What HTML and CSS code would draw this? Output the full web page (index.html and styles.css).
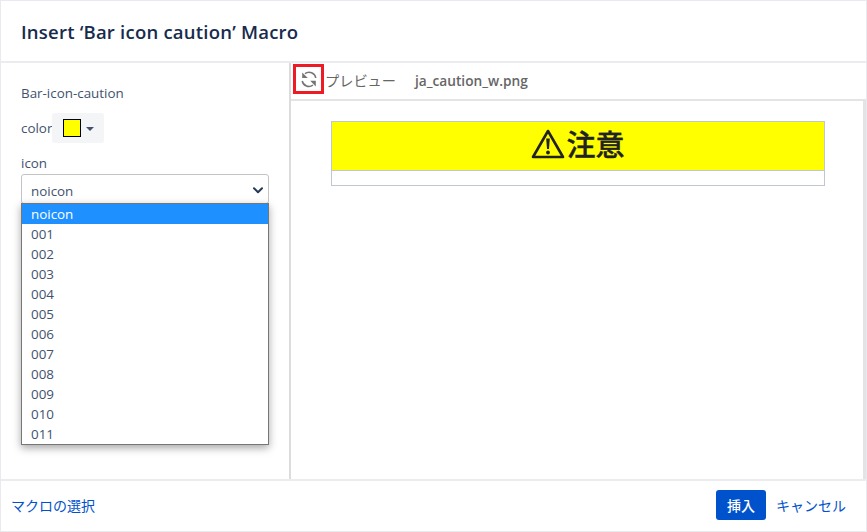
FILE: index.html
```html
<!DOCTYPE html>
<html lang="ja">
<head>
    <meta charset="UTF-8">
    <title>Insert Macro</title>
    <link rel="stylesheet" href="styles.css">
</head>
<body>
    <div class="dialog">
        <div class="dialog-header">
            <h1>Insert ‘Bar icon caution’ Macro</h1>
        </div>

        <div class="dialog-body">
            <div class="params">
                <div class="param-title">Bar-icon-caution</div>

                <div class="color-row">
                    <span>color</span>
                    <div class="color-btn">
                        <span class="swatch"></span>
                        <span class="caret"></span>
                    </div>
                </div>

                <div class="icon-label">icon</div>
                <div class="select-wrap">
                    <div class="select-box">
                        <span>noicon</span>
                        <svg class="chevron" width="10" height="7" viewBox="0 0 10 7">
                            <path d="M1 1.2 L5 5.2 L9 1.2" fill="none" stroke="#253858" stroke-width="2" stroke-linecap="round" stroke-linejoin="round"/>
                        </svg>
                    </div>
                    <ul class="select-list">
                        <li class="selected">noicon</li>
                        <li>001</li>
                        <li>002</li>
                        <li>003</li>
                        <li>004</li>
                        <li>005</li>
                        <li>006</li>
                        <li>007</li>
                        <li>008</li>
                        <li>009</li>
                        <li>010</li>
                        <li>011</li>
                    </ul>
                </div>
            </div>

            <div class="preview">
                <div class="preview-bar">
                    <div class="refresh-btn">
                        <svg width="18" height="18" viewBox="0 0 18 18">
                            <path d="M15.8 8 A6.8 6.8 0 0 0 5 3.6" fill="none" stroke="#757575" stroke-width="1.5"/>
                            <path d="M2.2 2.4 L2.2 8 L7.8 8 Z" fill="#757575"/>
                            <path d="M2.2 11 A6.8 6.8 0 0 0 13 15" fill="none" stroke="#757575" stroke-width="1.5"/>
                            <path d="M15.8 16.4 L15.8 10.8 L10.2 10.8 Z" fill="#757575"/>
                        </svg>
                    </div>
                    <span class="preview-label">プレビュー</span>
                    <span class="file-name">ja_caution_w.png</span>
                </div>

                <div class="preview-area">
                    <div class="bar-table">
                        <div class="bar-yellow">
                            <svg class="warn-icon" width="34" height="30" viewBox="0 0 34 30">
                                <path d="M17 2 L32 28 L2 28 Z" fill="none" stroke="#222" stroke-width="2.6" stroke-linejoin="round"/>
                                <path d="M15.2 9.5 L18.8 9.5 L18 20 L16 20 Z" fill="#222"/>
                                <circle cx="17" cy="23.5" r="1.9" fill="#222"/>
                            </svg>
                            <span class="bar-text">注意</span>
                        </div>
                        <div class="bar-empty"></div>
                    </div>
                </div>
            </div>
        </div>

        <div class="dialog-footer">
            <a href="#" class="link">マクロの選択</a>
            <div class="footer-actions">
                <button class="insert-btn">挿入</button>
                <a href="#" class="link">キャンセル</a>
            </div>
        </div>
    </div>
</body>
</html>
```

FILE: styles.css
```css
* {
    margin: 0;
    padding: 0;
    box-sizing: border-box;
}

body {
    font-family: 'Open Sans', 'Noto Sans CJK JP', sans-serif;
    font-size: 13.4px;
    color: #42526e;
    background: white;
    width: 867px;
    height: 532px;
    overflow: hidden;
}

.dialog {
    width: 867px;
    height: 532px;
    display: flex;
    flex-direction: column;
    border: 1px solid #e9e9ef;
}

.dialog-header {
    height: 62px;
    padding: 0 20px 0;
    display: flex;
    align-items: center;
    border-bottom: 2px solid #ebecf0;
    flex-shrink: 0;
}

.dialog-header h1 {
    font-size: 18.5px;
    font-weight: 600;
    letter-spacing: 0.22px;
    color: #172b4d;
}

.dialog-body {
    flex: 1;
    display: flex;
    min-height: 0;
}

.params {
    width: 288px;
    padding: 21px 20px 0;
    flex-shrink: 0;
    color: #42526e;
}

.param-title {
    line-height: 18px;
}

.color-row {
    display: flex;
    align-items: center;
    margin-top: 11px;
    height: 30px;
}

.color-row > span {
    margin-top: -1px;
}

.color-btn {
    width: 52px;
    height: 30px;
    background: #f4f5f7;
    border-radius: 3px;
    display: flex;
    align-items: center;
    padding-left: 11px;
}

.swatch {
    width: 18px;
    height: 18px;
    background: #ffff00;
    border: 1px solid black;
}

.caret {
    width: 0;
    height: 0;
    margin-left: 5px;
    margin-top: 2px;
    border-left: 4px solid transparent;
    border-right: 4px solid transparent;
    border-top: 4px solid #42526e;
}

.icon-label {
    margin-top: 11px;
    line-height: 18px;
}

.select-wrap {
    position: relative;
    margin-top: 2px;
}

.select-box {
    width: 248px;
    height: 30px;
    border: 1px solid #c4c4c4;
    border-radius: 3px;
    display: flex;
    align-items: center;
    justify-content: space-between;
    padding: 3px 5px 0 9px;
    color: #42526e;
}

.select-list {
    position: absolute;
    top: 29px;
    left: 0;
    width: 248px;
    list-style: none;
    background: white;
    border: 1px solid #767676;
    box-shadow: 0 3px 8px rgba(0, 0, 0, 0.35);
}

.select-list li {
    height: 20px;
    line-height: 20px;
    padding-left: 9px;
}

.select-list li.selected {
    background: #1e90ff;
    color: white;
}

.preview {
    flex: 1;
    display: flex;
    flex-direction: column;
    border-left: 2px solid #dcdcdc;
    min-width: 0;
}

.preview-bar {
    height: 38px;
    display: flex;
    align-items: center;
    padding: 0 0 2px 2px;
    border-bottom: 2px solid #e4e4e4;
    flex-shrink: 0;
    color: #666;
}

.refresh-btn {
    width: 31px;
    height: 30px;
    margin-bottom: 2px;
    border: 3px solid #ed1c24;
    display: flex;
    align-items: center;
    justify-content: center;
}

.preview-label {
    font-size: 14.2px;
    margin-left: 1px;
}

.file-name {
    font-size: 13.7px;
    font-weight: 600;
    margin-left: 19px;
}

.preview-area {
    flex: 1;
    padding: 20px 40px 0;
    border-right: 3px solid #e4e4e4;
}

.bar-table {
    width: 494px;
    border: 1px solid #c1c7d0;
}

.bar-yellow {
    height: 49px;
    background: #ffff00;
    border-bottom: 1px solid #c1c7d0;
    display: flex;
    align-items: center;
    justify-content: center;
    gap: 1px;
    padding-bottom: 4px;
}

.bar-text {
    font-size: 29px;
    font-weight: 500;
    -webkit-text-stroke: 0.4px #222;
    color: #222;
    line-height: 1;
}

.bar-empty {
    height: 14px;
}

.dialog-footer {
    height: 52px;
    border-top: 2px solid #ebecf0;
    flex-shrink: 0;
    display: flex;
    align-items: center;
    justify-content: space-between;
    padding: 0 20px 2px 10px;
}

.footer-actions {
    display: flex;
    align-items: center;
    gap: 10px;
}

.link {
    color: #0052cc;
    text-decoration: none;
    font-size: 14px;
}

.insert-btn {
    width: 50px;
    height: 30px;
    background: #0052cc;
    color: white;
    border: none;
    border-radius: 3px;
    font-family: inherit;
    font-size: 14px;
    font-weight: 500;
}
```
